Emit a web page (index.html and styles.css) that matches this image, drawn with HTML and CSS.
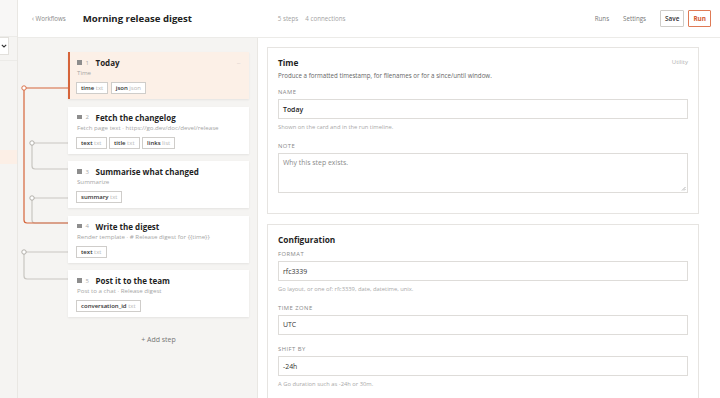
FILE: index.html
```html
<!DOCTYPE html>
<html lang="en">
<head>
    <meta charset="UTF-8">
    <title>Morning release digest</title>
    <link rel="stylesheet" href="styles.css">
</head>
<body>
    <aside class="sidebar">
        <div class="sidebar-top"></div>
        <div class="picker-row">
            <div class="picker">
                <svg class="chev" width="6" height="4" viewBox="0 0 6 4"><path d="M0.8 0.8 L3 3 L5.2 0.8" fill="none" stroke="#333" stroke-width="1.1"/></svg>
            </div>
        </div>
        <ul class="wf-list">
            <li></li>
            <li></li>
            <li class="active"></li>
            <li></li>
        </ul>
    </aside>

    <div class="main">
        <header class="topbar">
            <a class="back">‹ Workflows</a>
            <h1>Morning release digest</h1>
            <div class="meta"><span>5 steps</span><span>4 connections</span></div>
            <nav class="actions">
                <a>Runs</a>
                <a>Settings</a>
                <button class="btn">Save</button>
                <button class="btn run">Run</button>
            </nav>
        </header>

        <div class="workspace">
            <section class="canvas">
                <!-- edges between steps -->
                <svg class="edges" width="240" height="360">
                    <path d="M50 105 H14 V128 Q14 131 17 131 H50" class="edge"/>
                    <path d="M50 160 H14 V182 Q14 185 17 185 H50" class="edge"/>
                    <path d="M50 214 H6 V238 Q6 241 9 241 H50" class="edge"/>
                    <path d="M50 50 H6 V182 Q6 185 9 185 H50" class="edge hot"/>
                    <circle cx="14" cy="105" r="2.2" class="port"/>
                    <circle cx="14" cy="160" r="2.2" class="port"/>
                    <circle cx="6" cy="214" r="2.2" class="port"/>
                    <circle cx="6" cy="50" r="2.2" class="port hot"/>
                </svg>

                <div class="steps">
                    <div class="step selected">
                        <div class="step-head"><i class="sq"></i><span class="num">1</span><b>Today</b><span class="more">···</span></div>
                        <div class="step-sub">Time</div>
                        <div class="tags"><span class="tag">time <em>txt</em></span><span class="tag">json <em>json</em></span></div>
                    </div>
                    <div class="step">
                        <div class="step-head"><i class="sq"></i><span class="num">2</span><b>Fetch the changelog</b></div>
                        <div class="step-sub">Fetch page text · https://go.dev/doc/devel/release</div>
                        <div class="tags"><span class="tag">text <em>txt</em></span><span class="tag">title <em>txt</em></span><span class="tag">links <em>list</em></span></div>
                    </div>
                    <div class="step">
                        <div class="step-head"><i class="sq"></i><span class="num">3</span><b>Summarise what changed</b></div>
                        <div class="step-sub">Summarize</div>
                        <div class="tags"><span class="tag">summary <em>txt</em></span></div>
                    </div>
                    <div class="step">
                        <div class="step-head"><i class="sq"></i><span class="num">4</span><b>Write the digest</b></div>
                        <div class="step-sub">Render template · # Release digest for {{time}}</div>
                        <div class="tags"><span class="tag">text <em>txt</em></span></div>
                    </div>
                    <div class="step">
                        <div class="step-head"><i class="sq"></i><span class="num">5</span><b>Post it to the team</b></div>
                        <div class="step-sub">Post to a chat · Release digest</div>
                        <div class="tags"><span class="tag">conversation_id <em>txt</em></span></div>
                    </div>
                    <div class="add-step">+ Add step</div>
                </div>
            </section>

            <section class="inspector">
                <div class="panel">
                    <div class="panel-title"><h2>Time</h2><span class="kind">Utility</span></div>
                    <p class="desc">Produce a formatted timestamp, for filenames or for a since/until window.</p>
                    <div class="field">
                        <label>Name</label>
                        <div class="input strong">Today</div>
                        <p class="hint">Shown on the card and in the run timeline.</p>
                    </div>
                    <div class="field">
                        <label>Note</label>
                        <div class="input area placeholder">Why this step exists.
                            <svg class="grip" width="5" height="5" viewBox="0 0 5 5"><path d="M4.5 1 L1 4.5 M4.5 3 L3 4.5" stroke="#999" stroke-width="0.7"/></svg>
                        </div>
                    </div>
                </div>

                <div class="panel">
                    <div class="panel-title"><h2>Configuration</h2></div>
                    <div class="field">
                        <label>Format</label>
                        <div class="input">rfc3339</div>
                        <p class="hint">Go layout, or one of: rfc3339, date, datetime, unix.</p>
                    </div>
                    <div class="field">
                        <label>Time zone</label>
                        <div class="input">UTC</div>
                    </div>
                    <div class="field">
                        <label>Shift by</label>
                        <div class="input">-24h</div>
                        <p class="hint">A Go duration such as -24h or 30m.</p>
                    </div>
                </div>
            </section>
        </div>
    </div>
</body>
</html>
```

FILE: styles.css
```css
* {
    box-sizing: border-box;
}

body {
    margin: 0;
    height: 398px;
    overflow: hidden;
    display: flex;
    font-family: 'Open Sans', 'Noto Sans', sans-serif;
    font-size: 6.2px;
    color: #2a2a2a;
    background: #fff;
}

/* left rail, mostly scrolled out of view */
.sidebar {
    width: 18px;
    flex-shrink: 0;
    background: #f5f4f2;
    border-right: 1px solid #e9e7e3;
    overflow: hidden;
}

.sidebar-top {
    height: 37px;
    border-bottom: 1px solid #ecebe8;
    background: #f8f7f6;
}

.picker-row {
    height: 24px;
    border-bottom: 1px solid #ecebe8;
}

.picker {
    width: 160px;
    height: 18px;
    margin-left: -151px;
    background: #fff;
    border: 1px solid #e2e0dc;
    display: flex;
    align-items: center;
    justify-content: flex-end;
    padding: 0 1px 0 8px;
}

.chev {
    display: block;
}

.wf-list {
    list-style: none;
    margin: 0;
    padding: 62px 0 0;
}

.wf-list li {
    height: 13.5px;
}

.wf-list li.active {
    background: #fcefe6;
}

.main {
    flex: 1;
    display: flex;
    flex-direction: column;
    min-width: 0;
}

.topbar {
    height: 38px;
    flex-shrink: 0;
    display: flex;
    align-items: center;
    padding: 0 9px 0 14px;
    border-bottom: 1px solid #ecebe8;
}

.back {
    color: #888;
    font-size: 6.2px;
}

.topbar h1 {
    width: 195px;
    font-size: 9.6px;
    font-weight: 700;
    margin: 0 0 0 17px;
    color: #222;
}

.meta {
    display: flex;
    gap: 7px;
    color: #a3a3a3;
    font-size: 6.2px;
}

.actions {
    margin-left: auto;
    display: flex;
    align-items: center;
    color: #777;
}

.actions a {
    margin-right: 14px;
}

.btn {
    font-family: inherit;
    font-size: 6.4px;
    font-weight: 600;
    color: #333;
    background: #fff;
    border: 1px solid #cfcdc9;
    border-radius: 1px;
    height: 17px;
    padding: 0 4px;
    margin-left: 0;
}

.btn.run {
    margin-left: 4px;
    color: #d35a2f;
    border-color: #df7a55;
    font-weight: 700;
}

.workspace {
    flex: 1;
    display: flex;
    min-height: 0;
}

.canvas {
    position: relative;
    width: 240px;
    flex-shrink: 0;
    background: #f5f4f2;
    border-right: 1px solid #e9e7e3;
}

.edges {
    position: absolute;
    left: 0;
    top: 0;
}

.edge {
    fill: none;
    stroke: #c9c6c1;
    stroke-width: 1.2;
}

.edge.hot {
    stroke: #d6643a;
}

.port {
    fill: #fff;
    stroke: #aaa7a2;
    stroke-width: 0.9;
}

.port.hot {
    stroke: #d6643a;
}

.steps {
    position: relative;
    margin: 14px 0 0 50px;
    width: 181px;
}

.step {
    height: 47px;
    background: #fff;
    padding: 4px 9px 0;
    margin-bottom: 7.5px;
    box-shadow: 0 1px 2px rgba(0, 0, 0, 0.07);
}

.step.selected {
    background: #fcf0e7;
    box-shadow: inset 2px 0 0 #d6643a, 0 1px 2px rgba(0, 0, 0, 0.07);
}

.step-head {
    display: flex;
    align-items: center;
    height: 13px;
}

.sq {
    width: 4.5px;
    height: 4.5px;
    background: #8d8d8d;
    margin-right: 4px;
}

.num {
    color: #aaa;
    font-size: 6px;
    width: 10px;
}

.step-head b {
    font-size: 8px;
    font-weight: 700;
    color: #1f1f1f;
}

.more {
    margin-left: auto;
    color: #c9c4bf;
    font-size: 6px;
    letter-spacing: -0.5px;
}

.step-sub {
    color: #a5a5a5;
    font-size: 6.15px;
    line-height: 8px;
    height: 8px;
    white-space: nowrap;
}

.tags {
    display: flex;
    gap: 2.5px;
    margin-top: 5px;
    margin-left: -1px;
}

.tag {
    height: 12px;
    line-height: 10px;
    padding: 0 4px;
    border: 1px solid #cfcdca;
    background: #fff;
    font-size: 6px;
    font-weight: 600;
    color: #333;
}

.tag em {
    font-style: normal;
    font-weight: 400;
    color: #b5b5b5;
}

.add-step {
    text-align: center;
    margin-top: 18px;
    font-size: 7px;
    color: #777;
}

.inspector {
    flex: 1;
    padding: 9px 21px 0 9px;
    background: #fff;
    overflow: hidden;
}

.panel {
    border: 1px solid #e6e4e1;
    padding: 8px 10px 10px;
    margin-bottom: 10px;
}

.panel-title {
    display: flex;
    justify-content: space-between;
    align-items: center;
    height: 12px;
    margin-bottom: 5px;
}

.panel-title h2 {
    margin: 0;
    font-size: 8.3px;
    font-weight: 700;
    color: #1f1f1f;
}

.kind {
    color: #b0b0b0;
    font-size: 6px;
}

.desc {
    margin: -1px 0 8px;
    line-height: 8px;
    color: #666;
}

.field {
    margin-bottom: 10.5px;
}

.field label {
    display: block;
    font-size: 5.8px;
    line-height: 8px;
    letter-spacing: 0.5px;
    text-transform: uppercase;
    color: #888;
    margin-bottom: 3px;
}

.input {
    position: relative;
    height: 20px;
    border: 1px solid #dedcd9;
    padding: 0 4px;
    display: flex;
    align-items: center;
    font-size: 6.9px;
    color: #333;
}

.input.strong {
    font-weight: 600;
    color: #222;
}

.input.area {
    height: 40px;
    align-items: flex-start;
    padding-top: 4px;
}

.placeholder {
    color: #8a8a8a;
}

.grip {
    position: absolute;
    right: 1px;
    bottom: 1px;
}

.hint {
    margin: 4px 0 0;
    line-height: 8px;
    font-size: 5.8px;
    color: #a8a8a8;
}
```
